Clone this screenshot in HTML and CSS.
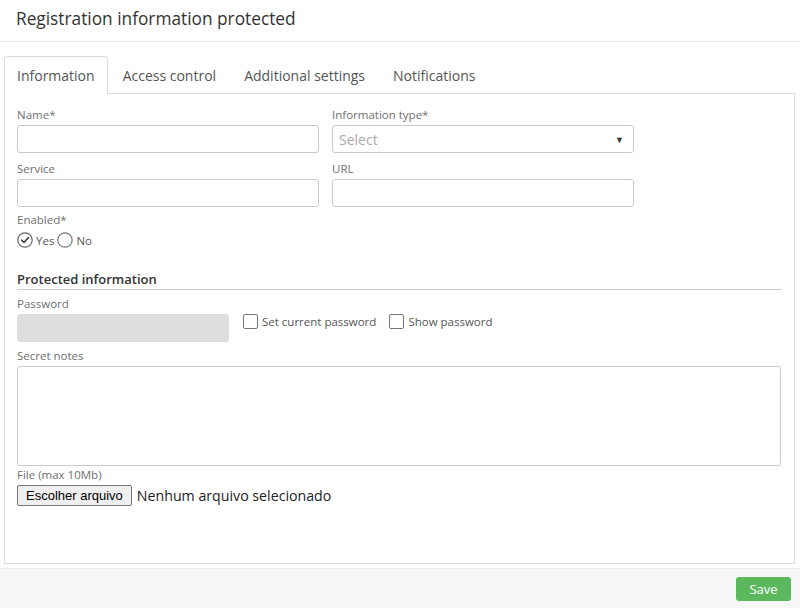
FILE: index.html
```html
<!DOCTYPE html>
<html>
<head>
<meta charset="utf-8">
<link rel="stylesheet" href="styles.css">
</head>
<body>
<div class="page">
  <header class="page-header">
    <h1 class="title">Registration information protected</h1>
  </header>
  <div class="tabs-wrap">
    <nav class="tabs">
      <a class="tab active">Information</a>
      <a class="tab">Access control</a>
      <a class="tab">Additional settings</a>
      <a class="tab">Notifications</a>
    </nav>
    <section class="panel">
      <div class="grid">
        <div class="field">
          <label class="label">Name*</label>
          <div class="input"></div>
        </div>
        <div class="field">
          <label class="label">Information type*</label>
          <div class="input select"><span class="placeholder">Select</span><span class="caret">▼</span></div>
        </div>
        <div class="field">
          <label class="label">Service</label>
          <div class="input"></div>
        </div>
        <div class="field">
          <label class="label">URL</label>
          <div class="input"></div>
        </div>
      </div>
      <label class="label">Enabled*</label>
      <div class="radios">
        <span class="radio-item">
          <svg class="radio" width="16" height="16" viewBox="0 0 16 16"><circle cx="8" cy="8" r="7.2" fill="#fff" stroke="#666" stroke-width="1.2"/><path d="M4.6 8.2 L7 10.5 L11.4 5.6" fill="none" stroke="#444" stroke-width="1.6" stroke-linecap="round" stroke-linejoin="round"/></svg>
          <span class="opt">Yes</span>
        </span>
        <span class="radio-item">
          <svg class="radio" width="16" height="16" viewBox="0 0 16 16"><circle cx="8" cy="8" r="7.2" fill="#fff" stroke="#777" stroke-width="1.2"/></svg>
          <span class="opt">No</span>
        </span>
      </div>
      <h2 class="section-title">Protected information</h2>
      <label class="label pw-label">Password</label>
      <div class="pw-row">
        <div class="input disabled"></div>
        <span class="check-item"><span class="checkbox"></span><span class="opt">Set current password</span></span>
        <span class="check-item"><span class="checkbox"></span><span class="opt">Show password</span></span>
      </div>
      <label class="label notes-label">Secret notes</label>
      <div class="textarea"></div>
      <label class="label file-label">File (max 10Mb)</label>
      <div class="file-row">
        <button class="file-btn" type="button">Escolher arquivo</button>
        <span class="file-name">Nenhum arquivo selecionado</span>
      </div>
    </section>
  </div>
  <footer class="footer">
    <button class="save" type="button">Save</button>
  </footer>
</div>
</body>
</html>
```
FILE: styles.css
```css
* { box-sizing: border-box; }
html, body { margin: 0; padding: 0; background: #fff; }
body {
  font-family: "Open Sans", "Noto Sans", sans-serif;
  color: #555;
  width: 800px;
  height: 608px;
  overflow: hidden;
}
.page { display: flex; flex-direction: column; height: 608px; }
.page-header {
  height: 42px;
  border-bottom: 1px solid #ececec;
  padding: 0 16px;
  display: flex;
  align-items: center;
}
.title {
  margin: 0;
  font-size: 17.3px;
  font-weight: 400;
  color: #333;
  line-height: 24px;
  margin-top: -4px;
}
.tabs-wrap { padding: 14px 5px 0 4px; }
.tabs { display: flex; height: 37px; align-items: flex-start; }
.tab {
  display: flex;
  align-items: center;
  padding: 0 12px;
  margin-right: 2px;
  border: 1px solid transparent;
  border-bottom: none;
  font-size: 14px;
  color: #555;
  border-radius: 4px 4px 0 0;
  height: 37px;
}
.tab.active {
  border-color: #ddd;
  height: 38px;
  background: #fff;
  position: relative;
  z-index: 1;
}
.panel {
  border: 1px solid #ddd;
  height: 471px;
  padding: 13px 13px 0 12px;
}
.grid {
  display: grid;
  grid-template-columns: 302px 302px;
  column-gap: 13px;
  row-gap: 8px;
}
.label {
  display: block;
  font-size: 11.5px;
  line-height: 16px;
  color: #6f6f6f;
  margin-bottom: 2px;
}
.input {
  height: 28px;
  border: 1px solid #ccc;
  border-radius: 3px;
  background: #fff;
}
.select {
  display: flex;
  align-items: center;
  justify-content: space-between;
  padding: 0 9px 0 6px;
}
.placeholder { font-size: 14px; color: #aaa; }
.caret { font-size: 9px; color: #333; }
.grid + .label { margin-top: 5px; }
.radios { display: flex; align-items: center; gap: 3px; height: 18px; margin-top: 3px; }
.radio-item { display: flex; align-items: center; gap: 3px; }
.radio { display: block; }
.opt { font-size: 11.5px; color: #555; }
.section-title {
  margin: 20px 0 0;
  font-size: 13px;
  font-weight: 600;
  color: #333;
  line-height: 20px;
  border-bottom: 1px solid #ccc;
  padding-bottom: 0;
}
.pw-label { margin-top: 6px; }
.pw-row { display: flex; align-items: flex-start; }
.input.disabled { width: 212px; background: #ddd; border-color: #ddd; }
.check-item { display: flex; align-items: center; gap: 4px; margin-left: 14px; margin-top: 0; }
.check-item + .check-item { margin-left: 13px; }
.checkbox {
  width: 15px; height: 15px;
  border: 1px solid #777;
  border-radius: 2px;
  background: #fff;
}
.notes-label { margin-top: 6px; }
.textarea {
  height: 100px;
  border: 1px solid #ccc;
  border-radius: 3px;
}
.file-label { margin-top: 1px; }
.file-row { display: flex; align-items: center; gap: 5px; }
.file-btn {
  font-family: "Liberation Sans", Arial, sans-serif;
  font-size: 13px;
  height: 21px;
  padding: 0 8px;
  background: #efefef;
  border: 1px solid #767676;
  border-radius: 2px;
  color: #000;
}
.file-name { font-size: 14.2px; color: #222; }
.footer {
  margin-top: 4px;
  flex: 1;
  background: #f6f6f6;
  border-top: 1px solid #ececec;
  display: flex;
  justify-content: flex-end;
  align-items: flex-start;
  padding: 8px 9px 0 0;
}
.save {
  font-family: inherit;
  width: 55px;
  height: 24px;
  border: none;
  border-radius: 3px;
  background: #5cb85c;
  color: #fff;
  font-size: 13px;
  padding: 0;
}
```
